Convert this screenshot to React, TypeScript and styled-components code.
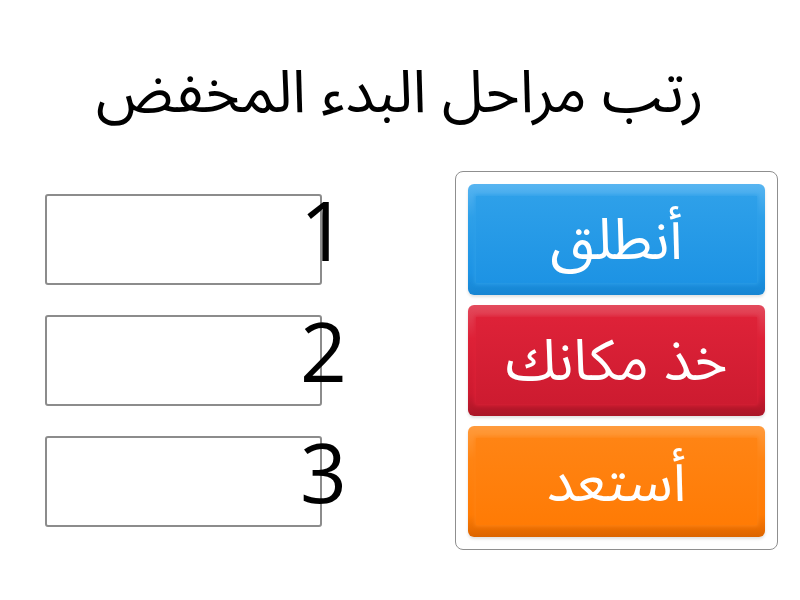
import React from "react";
import styled, { createGlobalStyle } from "styled-components";

const GlobalStyle = createGlobalStyle`
  html, body {
    margin: 0;
    padding: 0;
    background: #ffffff;
  }
  body {
    font-family: "Noto Sans Arabic", "Open Sans", "Noto Sans", sans-serif;
  }
`;

const Page = styled.div`
  width: 800px;
  height: 600px;
  display: flex;
  flex-direction: column;
  box-sizing: border-box;
`;

const Title = styled.h1`
  margin: 0;
  height: 171px;
  display: flex;
  align-items: center;
  justify-content: center;
  padding-top: 18px;
  box-sizing: border-box;
  font-family: "Noto Sans Arabic", sans-serif;
  font-size: 59px;
  font-weight: 400;
  line-height: 1.2;
  color: #000;
  direction: rtl;
`;

const Board = styled.div`
  display: flex;
  align-items: center;
  padding-left: 45px;
  gap: 133px;
`;

const Slots = styled.div`
  display: flex;
  flex-direction: column;
  gap: 30px;
`;

const Slot = styled.div`
  position: relative;
  width: 277px;
  height: 91px;
  box-sizing: border-box;
  border: 2px solid #8c8c8c;
  border-radius: 3px;
  background: #fff;
`;

const SlotNumber = styled.span`
  position: absolute;
  left: 253px;
  top: -8px;
  font-size: 82px;
  line-height: 1;
  color: #000;
  font-family: "Open Sans", sans-serif;
`;

const Tray = styled.div`
  width: 323px;
  box-sizing: border-box;
  border: 1.5px solid #8f8f8f;
  border-radius: 8px;
  padding: 12px;
  display: flex;
  flex-direction: column;
  gap: 10px;
`;

type Tone = { top: string; face1: string; face2: string; bottom: string };

const tones: Record<string, Tone> = {
  blue: { top: "#58b5f1", face1: "#2ea0e9", face2: "#1d93e4", bottom: "#1785d2" },
  red: { top: "#e34b5d", face1: "#de2238", face2: "#cd1b30", bottom: "#a91627" },
  orange: { top: "#ff9b3d", face1: "#ff8414", face2: "#ff7b05", bottom: "#dc6500" },
};

const Card = styled.div<{ $tone: Tone }>`
  height: 111px;
  box-sizing: border-box;
  border-radius: 6px;
  padding: 12px 8px 12px 8px;
  background: linear-gradient(
    to bottom,
    ${(p) => p.$tone.top} 0%,
    ${(p) => p.$tone.face1} 30%,
    ${(p) => p.$tone.face2} 80%,
    ${(p) => p.$tone.bottom} 100%
  );
  box-shadow: 0 2px 3px rgba(0, 0, 0, 0.12);
  display: flex;
`;

const Face = styled.div<{ $tone: Tone }>`
  flex: 1;
  display: flex;
  align-items: center;
  justify-content: center;
  background: linear-gradient(to bottom, ${(p) => p.$tone.face1}, ${(p) => p.$tone.face2});
  box-shadow: 0 0 4px 1px ${(p) => p.$tone.face1};
  color: #fff;
  font-family: "Noto Sans Arabic", sans-serif;
  font-size: 57px;
  line-height: 1;
  direction: rtl;
  padding-top: 4px;
  overflow: visible;
`;

const items = [
  { label: "أنطلق", tone: tones.blue },
  { label: "خذ مكانك", tone: tones.red },
  { label: "أستعد", tone: tones.orange },
];

export default function App() {
  return (
    <Page>
      <GlobalStyle />
      <Title>رتب مراحل البدء المخفض</Title>
      <Board>
        <Slots>
          {[1, 2, 3].map((n) => (
            <Slot key={n}>
              <SlotNumber>{n}</SlotNumber>
            </Slot>
          ))}
        </Slots>
        <Tray>
          {items.map((it) => (
            <Card key={it.label} $tone={it.tone}>
              <Face $tone={it.tone}>{it.label}</Face>
            </Card>
          ))}
        </Tray>
      </Board>
    </Page>
  );
}
